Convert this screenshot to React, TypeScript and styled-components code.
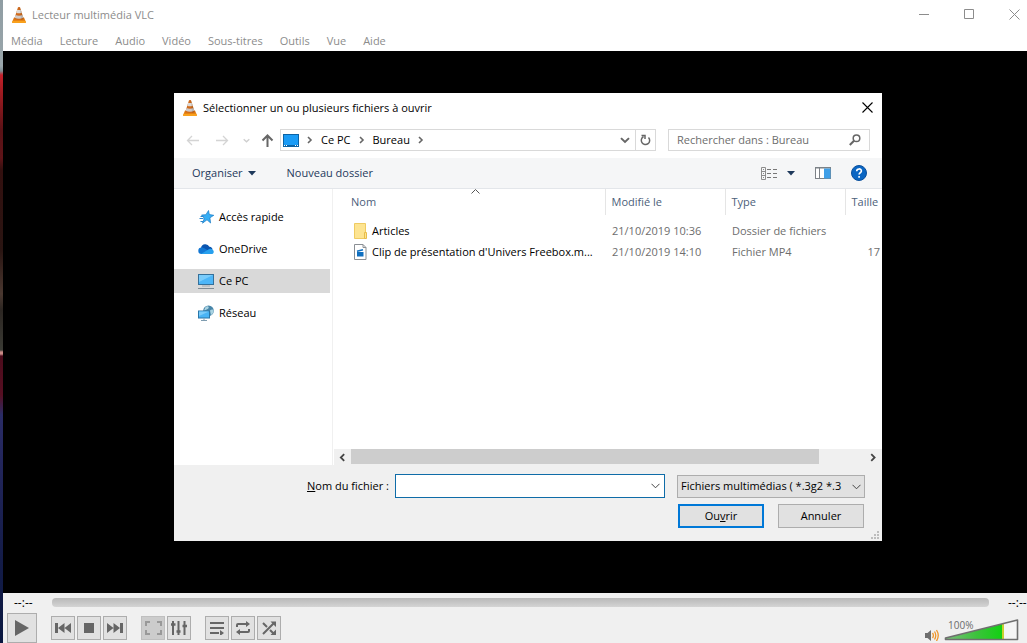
import React from "react";
import styled, { createGlobalStyle, css } from "styled-components";

const GlobalStyle = createGlobalStyle`
  *, *::before, *::after { box-sizing: border-box; }
  body {
    margin: 0;
    overflow: hidden;
    background: #000;
    font-family: "Open Sans", "Noto Sans", sans-serif;
    font-size: 11px;
    line-height: 16px;
    color: #000;
  }
  button, input, select { font: inherit; color: inherit; }
  svg { display: block; flex: none; }
`;

/* ---------- Main window ---------- */

const Desktop = styled.div`
  display: grid;
  grid-template-columns: 3px minmax(0, 1fr);
  min-height: 100vh;
`;

const Wallpaper = styled.div`
  background: linear-gradient(
    #8f9da3 0, #9aa6ab 66px, #7d8b90 71px, #c4202a 75px, #a81c22 88px,
    #5a1216 130px, #5e1418 158px, #33100f 170px, #2a1512 250px, #4a3830 294px,
    #2c2622 310px, #3a3a34 350px, #c98a86 352px, #c98a86 354px, #4c0c1c 356px,
    #560f22 395px, #2a2c66 415px, #23265c 460px, #141c48 560px, #0a1740 100%
  );
`;

const Window = styled.div`
  display: flex;
  flex-direction: column;
  min-width: 0;
  background: #fff;
`;

const TitleBar = styled.header`
  display: flex;
  align-items: center;
  height: 30px;
  padding-left: 8px;
  gap: 5px;
  color: #8c8c8c;
`;

const Title = styled.h1<{ $dark?: boolean }>`
  flex: 1;
  margin: 0;
  font-size: 11px;
  font-weight: 400;
  color: ${(p) => (p.$dark ? "#000" : "inherit")};
`;

const PlainButton = styled.button`
  display: flex;
  align-items: center;
  justify-content: center;
  padding: 0;
  border: 0;
  background: none;
`;

const CaptionButtons = styled.div`
  display: flex;
  align-self: flex-start;
  overflow: hidden;
  width: 125px;
`;

const CaptionButton = styled(PlainButton)`
  flex: none;
  width: 45px;
  height: 28px;
`;

const MenuBar = styled.nav`
  display: flex;
  gap: 17px;
  height: 21px;
  padding: 3px 8px 0;
  color: #8c8c8c;
`;

const MenuLink = styled.a`
  color: inherit;
  text-decoration: none;
`;

const Stage = styled.main`
  position: relative;
  flex: 1;
  min-height: 540px;
  background: #000;
`;

/* ---------- Player controls ---------- */

const Controls = styled.footer`
  height: 50px;
  background: #f0f0f0;
  overflow: hidden;
`;

const SeekRow = styled.div`
  display: flex;
  align-items: center;
  height: 19px;
  padding-left: 11px;
  gap: 19px;
`;

const Time = styled.span`
  flex: none;
  width: 19px;
  font-size: 12px;
  white-space: nowrap;
`;

const Seek = styled.input`
  appearance: none;
  flex: 1;
  min-width: 0;
  height: 9px;
  margin: 0;
  border-radius: 4px;
  background: linear-gradient(#b9b9b9, #c6c6c6 50%, #d4d4d4);
  &::-webkit-slider-thumb { appearance: none; width: 0; height: 0; }
`;

const ButtonRow = styled.div`
  display: flex;
  align-items: flex-start;
  padding: 1px 8px 0 4px;
`;

const ButtonGroup = styled.div<{ $wideGap?: boolean }>`
  display: flex;
  gap: 2px;
  padding-top: 3px;
  margin-left: 14px;
`;

const ControlButton = styled(PlainButton)<{ $large?: boolean; $off?: boolean }>`
  width: ${(p) => (p.$large ? "30px" : "24px")};
  height: ${(p) => (p.$large ? "30px" : "24px")};
  border: 1px solid ${(p) => (p.$off ? "#bfbfbf" : "#adadad")};
  background: ${(p) => (p.$off ? "#cccccc" : "#e1e1e1")};
`;

const Volume = styled.div`
  display: flex;
  align-items: flex-end;
  gap: 5px;
  margin-left: auto;
`;

const VolumeLevel = styled.div`
  position: relative;
  padding-top: 6px;
`;

const VolumeText = styled.span`
  position: absolute;
  left: 4px;
  top: 6px;
  font-size: 10px;
  line-height: 12px;
  color: #6b6b6b;
`;

/* ---------- File dialog ---------- */

const Dialog = styled.section`
  position: absolute;
  left: 171px;
  top: 42px;
  display: flex;
  flex-direction: column;
  width: 708px;
  height: 448px;
  background: #fff;
`;

const DialogTitle = styled.header`
  display: flex;
  align-items: center;
  gap: 5px;
  height: 29px;
  padding: 0 8px;
`;

const CloseButton = styled(PlainButton)`
  width: 14px;
  height: 14px;
`;

const NavRow = styled.div`
  display: flex;
  align-items: center;
  height: 36px;
  padding: 0 12px;
`;

const NavButtons = styled.div`
  display: grid;
  grid-template-columns: 30px 27px 18px 19px;
  align-items: center;
  justify-items: start;
`;

const AddressBar = styled.div`
  display: flex;
  flex: 1;
  height: 22px;
  border: 1px solid #d9d9d9;
`;

const Crumbs = styled.div`
  display: flex;
  flex: 1;
  align-items: center;
  gap: 7px;
  padding-left: 2px;
`;

const Crumb = styled.a`
  color: #000;
  text-decoration: none;
`;

const AddressButton = styled(PlainButton)<{ $ruled?: boolean }>`
  width: 20px;
  ${(p) =>
    p.$ruled &&
    css`
      border-left: 1px solid #d9d9d9;
    `}
`;

const SearchBox = styled.label`
  display: flex;
  align-items: center;
  width: 202px;
  height: 22px;
  margin-left: 12px;
  padding: 0 8px;
  border: 1px solid #d9d9d9;
`;

const SearchInput = styled.input`
  flex: 1;
  min-width: 0;
  padding: 0;
  border: 0;
  outline: 0;
  background: none;
  &::placeholder { color: #6d6d6d; opacity: 1; }
`;

const Toolbar = styled.div`
  display: flex;
  align-items: center;
  height: 31px;
  padding: 0 15px 0 18px;
  border-bottom: 1px solid #e3e6ea;
  background: #f5f6f7;
  color: #1e395b;
`;

const ToolButton = styled(PlainButton)<{ $wide?: boolean }>`
  gap: ${(p) => (p.$wide ? "9px" : "5px")};
`;

const ToolGroup = styled.div<{ $end?: boolean }>`
  display: flex;
  align-items: center;
  gap: ${(p) => (p.$end ? "20px" : "31px")};
  margin-left: ${(p) => (p.$end ? "auto" : "0")};
`;

const Browser = styled.div`
  display: grid;
  grid-template-columns: 159px minmax(0, 1fr);
  flex: 1;
`;

const Places = styled.nav`
  display: flex;
  flex-direction: column;
  gap: 8px;
  padding: 16px 2px 0 0;
  border-right: 1px solid #f0f0f0;
`;

const Place = styled.a<{ $current?: boolean }>`
  display: flex;
  align-items: center;
  gap: 5px;
  height: 24px;
  padding-left: 24px;
  color: #000;
  text-decoration: none;
  background: ${(p) => (p.$current ? "#d9d9d9" : "transparent")};
`;

const Listing = styled.div`
  display: flex;
  flex-direction: column;
  justify-content: space-between;
`;

const FileTable = styled.table`
  width: 100%;
  table-layout: fixed;
  border-collapse: collapse;
`;

const HeadCell = styled.th<{ $width?: number; $first?: boolean }>`
  position: relative;
  width: ${(p) => (p.$width ? `${p.$width}px` : "auto")};
  height: 26px;
  padding: 0 0 0 ${(p) => (p.$first ? "18px" : "6px")};
  border-left: ${(p) => (p.$first ? "0" : "1px solid #e5e5e5")};
  font-weight: 400;
  text-align: left;
  color: #4c607a;
  white-space: nowrap;
`;

const SortMark = styled.svg`
  position: absolute;
  top: 0;
  left: 51%;
`;

const FileBody = styled.tbody`
  &::before {
    content: "";
    display: block;
    height: 5px;
  }
`;

const Cell = styled.td<{ $end?: boolean }>`
  height: 21px;
  padding: 0 2px 0 7px;
  color: #6d6d6d;
  white-space: nowrap;
  text-align: ${(p) => (p.$end ? "right" : "left")};
`;

const NameCell = styled(Cell)`
  padding: 0 6px 0 21px;
  color: #000;
`;

const FileName = styled.span`
  display: flex;
  align-items: center;
  gap: 5px;
`;

const ScrollBar = styled.div`
  display: grid;
  grid-template-columns: 17px minmax(0, 1fr) 17px;
  height: 16px;
  margin: 0 0 0 1px;
  background: #f0f0f0;
`;

const Thumb = styled.div`
  width: 91%;
  height: 15px;
  background: #cdcdcd;
`;

const DialogFooter = styled.footer`
  display: flex;
  flex-direction: column;
  align-items: flex-end;
  gap: 6px;
  position: relative;
  height: 76px;
  padding: 9px 17px 0 0;
  background: #f0f0f0;
`;

const FieldRow = styled.div`
  display: flex;
  align-items: center;
`;

const FieldLabel = styled.label`
  margin-right: 6px;
`;

const Combo = styled.div`
  display: flex;
  width: 270px;
  height: 24px;
  margin-right: 12px;
  border: 1px solid #0f6ca8;
  background: #fff;
`;

const ComboInput = styled.input`
  flex: 1;
  min-width: 0;
  padding: 0 4px;
  border: 0;
  outline: 0;
`;

const ComboButton = styled(PlainButton)`
  width: 17px;
`;

const TypePicker = styled.div`
  position: relative;
  width: 188px;
  height: 23px;
`;

const TypeSelect = styled.select`
  appearance: none;
  width: 100%;
  height: 100%;
  padding: 0 20px 0 3px;
  border: 1px solid #adadad;
  border-radius: 0;
  background: #e1e1e1;
`;

const TypeChevron = styled.svg`
  position: absolute;
  right: 4px;
  top: 9px;
  pointer-events: none;
`;

const Actions = styled.div`
  display: flex;
  gap: 14px;
  padding-right: 1px;
`;

const ActionButton = styled.button<{ $primary?: boolean }>`
  width: 86px;
  height: 24px;
  padding: 0;
  border: ${(p) => (p.$primary ? "2px solid #0078d7" : "1px solid #adadad")};
  background: #e1e1e1;
`;

const Grip = styled.svg`
  position: absolute;
  right: 3px;
  bottom: 2px;
`;

/* ---------- Drawings ---------- */

const Cone = () => (
  <svg width="16" height="16" viewBox="0 0 16 16">
    <path d="M3 10.500h10l1.800 4.500a.8.8 0 0 1-.8 1H2a.8.8 0 0 1-.8-1z" fill="#e07a10" />
    <path d="M1.500 13.800h13l.4 1.400a.8.8 0 0 1-.8.8H1.900a.8.8 0 0 1-.8-.8z" fill="#f9a11c" />
    <path d="M7 .300Q8-.200 9 .300L12.700 12Q8 14.200 3.300 12z" fill="#cf6a1c" />
    <path d="M6.100 3h3.800l.9 2.700Q8 6.900 5.200 5.700z" fill="#dedad6" />
    <path d="M4.500 8Q8 9.500 11.500 8l.9 2.800Q8 12.800 3.600 10.800z" fill="#cfcac8" />
    <path d="M9 .300L12.700 12q-1.200.8-2.500 1L8.300.100z" fill="#000" opacity=".1" />
  </svg>
);

const Chevron = ({ dir, color = "#555", size = 8 }: { dir: "left" | "right" | "down"; color?: string; size?: number }) => (
  <svg width={size} height={size} viewBox="0 0 8 8" fill="none" stroke={color} strokeWidth="1.6">
    <path d={dir === "right" ? "M2 1 5 4 2 7" : dir === "left" ? "M5.500 1 2.500 4l3 3" : "M.8 2.500 4 5.500 7.200 2.500"} />
  </svg>
);

const ThinChevron = () => (
  <svg width="9" height="6" viewBox="0 0 9 6" fill="none" stroke="#444">
    <path d="M.5.8l4 4 4-4" />
  </svg>
);

const Arrow = ({ dir, color }: { dir: "left" | "right" | "up"; color: string }) => (
  <svg width="13" height="13" viewBox="0 0 13 13" fill="none" stroke={color} strokeWidth={dir === "up" ? 2 : 1.3}>
    <path
      d={
        dir === "left"
          ? "M13 6.500H1.500M6 2 1.500 6.500 6 11"
          : dir === "right"
          ? "M0 6.500h11.500M7 2l4.500 4.500L7 11"
          : "M6.500 13V1.500M1.500 6.500l5-5 5 5"
      }
    />
  </svg>
);

const Caret = () => (
  <svg width="8" height="5" viewBox="0 0 8 5">
    <path d="M0 0h8L4 4.500z" fill="#1e395b" />
  </svg>
);

const DesktopIcon = () => (
  <svg width="16" height="13" viewBox="0 0 16 13">
    <rect x=".5" y=".5" width="15" height="12" fill="#1a9bf5" stroke="#0b63a5" />
    <path d="M2 11.500h12" stroke="#0b63a5" />
    <path d="M1 11.500h1M3 11.500h1M12 11.500h1M14 11.500h1" stroke="#fff" />
  </svg>
);

const StarIcon = () => (
  <svg width="16" height="16" viewBox="0 0 16 16">
    <path d="M10.500 1.500l.8 4 4.500.8-3.900 2.500.7 5.200-3.600-3.200-4.500 3.400 1.800-4.900L3.500 6l4.400-.3z" fill="#35aef5" stroke="#1579c4" strokeWidth=".7" />
    <path d="M2.500 7.500h3M1.500 9.500h4M2.500 12.500H5" stroke="#2b86cc" />
  </svg>
);

const CloudIcon = () => (
  <svg width="16" height="16" viewBox="0 0 16 16">
    <path d="M3 6.500a4.500 4.500 0 0 1 8.400-.8c2.200.2 3 1.300 3.100 2.800L8 11.500z" fill="#0a55b0" />
    <path d="M3.500 13A3.200 3.200 0 0 1 3.600 6.500c1.500 0 2.500.6 3.600 1.300l6 3.700-1.700 1.500z" fill="#1277d4" />
    <path d="M3 13 10 8.800c1-.9 2.300-1.300 3.500-.9 3.200 1 2.900 5.100-.3 5.100z" fill="#27a0ee" />
  </svg>
);

const ComputerIcon = () => (
  <svg width="16" height="16" viewBox="0 0 16 16">
    <rect x=".5" y="1.500" width="15" height="10" fill="#4db6f8" stroke="#35709a" />
    <path d="M1 2h14L1 9z" fill="#7accfb" />
    <path d="M4 13h8" stroke="#9fa9b0" />
    <path d="M0 15.500h16" stroke="#7f8b94" />
  </svg>
);

const NetworkIcon = () => (
  <svg width="16" height="16" viewBox="0 0 16 16">
    <circle cx="10.500" cy="5.800" r="5.300" fill="#4785a8" />
    <path d="M7.500 2c1.600-1.300 3.600-.8 3.200.8S8.500 4.600 6 5.500zM12 5.500c1.500-1.500 3-1.300 3.500-.2.200 2.200-1 4-2.500 5z" fill="#a9d3e2" />
    <rect x=".5" y="6" width="11" height="7" fill="#49b4f5" stroke="#2a76a8" />
    <path d="M1 6.500h10L1 11z" fill="#7accfb" />
    <path d="M3 15.500h6M6 13.500v2" stroke="#7f9db0" />
  </svg>
);

const FolderIcon = () => (
  <svg width="13" height="16" viewBox="0 0 13 16">
    <path d="M.5.500h11v15H.5z" fill="#fde491" stroke="#efcb62" />
    <path d="M10.500 9.500h2v6h-2z" fill="#fde491" stroke="#e8bd4a" />
  </svg>
);

const VideoFileIcon = () => (
  <svg width="13" height="16" viewBox="0 0 13 16">
    <path d="M.5.500h8.500l3 3v12H.5z" fill="#fff" stroke="#8a8f94" />
    <path d="M9 .500v3h3" fill="none" stroke="#8a8f94" />
    <path d="M3 8h6.500v4.500H3z" fill="#0f6fc0" />
    <path d="M3 7.200l6-1.500" stroke="#0f6fc0" strokeWidth="1.400" />
  </svg>
);

const places = [
  { label: "Accès rapide", icon: <StarIcon /> },
  { label: "OneDrive", icon: <CloudIcon /> },
  { label: "Ce PC", icon: <ComputerIcon />, current: true },
  { label: "Réseau", icon: <NetworkIcon /> },
];

const files = [
  { name: "Articles", icon: <FolderIcon />, date: "21/10/2019 10:36", type: "Dossier de fichiers", size: "" },
  { name: "Clip de présentation d'Univers Freebox.m...", icon: <VideoFileIcon />, date: "21/10/2019 14:10", type: "Fichier MP4", size: "17" },
];

const menus = ["Média", "Lecture", "Audio", "Vidéo", "Sous-titres", "Outils", "Vue", "Aide"];

const FileDialog = () => (
  <Dialog role="dialog" aria-labelledby="dialog-title">
    <DialogTitle>
      <Cone />
      <Title as="h2" id="dialog-title" $dark>
        Sélectionner un ou plusieurs fichiers à ouvrir
      </Title>
      <CloseButton aria-label="Fermer">
        <svg width="11" height="11" viewBox="0 0 11 11" stroke="#000" strokeWidth="1.100">
          <path d="M.5.500l10 10M10.500.500l-10 10" />
        </svg>
      </CloseButton>
    </DialogTitle>

    <NavRow>
      <NavButtons>
        <PlainButton aria-label="Précédent"><Arrow dir="left" color="#d4d4d4" /></PlainButton>
        <PlainButton aria-label="Suivant"><Arrow dir="right" color="#d4d4d4" /></PlainButton>
        <PlainButton aria-label="Emplacements récents"><Chevron dir="down" color="#cfcfcf" size={7} /></PlainButton>
        <PlainButton aria-label="Dossier parent"><Arrow dir="up" color="#666" /></PlainButton>
      </NavButtons>
      <AddressBar>
        <Crumbs>
          <DesktopIcon />
          <Chevron dir="right" color="#666" />
          <Crumb href="#pc">Ce PC</Crumb>
          <Chevron dir="right" color="#666" />
          <Crumb href="#bureau">Bureau</Crumb>
          <Chevron dir="right" color="#666" />
        </Crumbs>
        <AddressButton aria-label="Historique"><Chevron dir="down" color="#666" size={10} /></AddressButton>
        <AddressButton aria-label="Actualiser" $ruled>
          <svg width="11" height="12" viewBox="0 0 11 12" fill="none" stroke="#666" strokeWidth="1.500">
            <path d="M3.500 2.700A4.200 4.200 0 1 0 8.500 3.500M1.500 1.500h3.500v3.500" />
          </svg>
        </AddressButton>
      </AddressBar>
      <SearchBox>
        <SearchInput type="search" aria-label="Rechercher" placeholder="Rechercher dans : Bureau" />
        <svg width="12" height="12" viewBox="0 0 12 12" fill="none" stroke="#666" strokeWidth="1.500">
          <circle cx="7.500" cy="4.300" r="3.300" />
          <path d="M5 6.800.8 11" strokeWidth="2" />
        </svg>
      </SearchBox>
    </NavRow>

    <Toolbar>
      <ToolGroup>
        <ToolButton>Organiser <Caret /></ToolButton>
        <ToolButton>Nouveau dossier</ToolButton>
      </ToolGroup>
      <ToolGroup $end>
        <ToolButton $wide aria-label="Affichage">
          <svg width="17" height="13" viewBox="0 0 17 13" fill="none" stroke="#8c8c8c">
            <path d="M.5.500h4v12h-4zM2 2.500h1M2 6.500h1M2 10.500h1M.5 4.500h4M.5 8.500h4" />
            <path d="M6 2.500h4M12 2.500h4M6 6.500h4M12 6.500h4M6 10.500h4M12 10.500h4" stroke="#777" />
          </svg>
          <Caret />
        </ToolButton>
        <ToolButton aria-label="Volet de visualisation">
          <svg width="16" height="12" viewBox="0 0 16 12">
            <rect x=".5" y=".5" width="15" height="11" fill="#fff" stroke="#7d8287" />
            <path d="M0 1h16M4.500 1v11" stroke="#7d8287" />
            <rect x="9" y="1.500" width="6.500" height="10" fill="#3f9fe8" />
          </svg>
        </ToolButton>
        <ToolButton aria-label="Aide">
          <svg width="16" height="16" viewBox="0 0 16 16">
            <circle cx="8" cy="8" r="7.500" fill="#0b66c3" stroke="#0a4f9c" />
            <path d="M5.700 6.200c0-3 4.700-3 4.700-.2 0 1.800-2.300 1.700-2.300 3.500M8.100 11v1.700" fill="none" stroke="#fff" strokeWidth="1.600" />
          </svg>
        </ToolButton>
      </ToolGroup>
    </Toolbar>

    <Browser>
      <Places>
        {places.map((p) => (
          <Place key={p.label} href="#" $current={p.current}>
            {p.icon}
            {p.label}
          </Place>
        ))}
      </Places>
      <Listing>
        <FileTable>
          <thead>
            <tr>
              <HeadCell $width={272} $first>
                Nom
                <SortMark width="9" height="5" viewBox="0 0 9 5" fill="none" stroke="#555">
                  <path d="M.5 4.500l4-4 4 4" />
                </SortMark>
              </HeadCell>
              <HeadCell $width={120}>Modifié le</HeadCell>
              <HeadCell $width={120}>Type</HeadCell>
              <HeadCell>Taille</HeadCell>
            </tr>
          </thead>
          <FileBody>
            {files.map((f) => (
              <tr key={f.name}>
                <NameCell>
                  <FileName>{f.icon}{f.name}</FileName>
                </NameCell>
                <Cell>{f.date}</Cell>
                <Cell>{f.type}</Cell>
                <Cell $end>{f.size}</Cell>
              </tr>
            ))}
          </FileBody>
        </FileTable>
        <ScrollBar>
          <PlainButton aria-label="Défiler à gauche"><Chevron dir="left" color="#444" size={9} /></PlainButton>
          <Thumb />
          <PlainButton aria-label="Défiler à droite"><Chevron dir="right" color="#444" size={9} /></PlainButton>
        </ScrollBar>
      </Listing>
    </Browser>

    <DialogFooter>
      <FieldRow>
        <FieldLabel htmlFor="filename"><u>N</u>om du fichier :</FieldLabel>
        <Combo>
          <ComboInput id="filename" type="text" />
          <ComboButton aria-label="Fichiers récents"><ThinChevron /></ComboButton>
        </Combo>
        <TypePicker>
          <TypeSelect aria-label="Type de fichier">
            <option>Fichiers multimédias ( *.3g2 *.3</option>
          </TypeSelect>
          <TypeChevron width="9" height="6" viewBox="0 0 9 6" fill="none" stroke="#444">
            <path d="M.5.800l4 4 4-4" />
          </TypeChevron>
        </TypePicker>
      </FieldRow>
      <Actions>
        <ActionButton $primary>Ou<u>v</u>rir</ActionButton>
        <ActionButton>Annuler</ActionButton>
      </Actions>
      <Grip width="8" height="8" viewBox="0 0 8 8" fill="#bdbdbd">
        <path d="M6 0h2v2H6zM3 3h2v2H3zM6 3h2v2H6zM0 6h2v2H0zM3 6h2v2H3zM6 6h2v2H6z" />
      </Grip>
    </DialogFooter>
  </Dialog>
);

const PlayerControls = () => (
  <Controls>
    <SeekRow>
      <Time>--:--</Time>
      <Seek type="range" aria-label="Position" defaultValue={0} />
      <Time>--:--</Time>
    </SeekRow>
    <ButtonRow>
      <ControlButton $large aria-label="Lecture">
        <svg width="14" height="16" viewBox="0 0 14 16" fill="#666"><path d="M0 0l14 8-14 8z" /></svg>
      </ControlButton>
      <ButtonGroup>
        <ControlButton aria-label="Précédent">
          <svg width="16" height="10" viewBox="0 0 16 10" fill="#666"><path d="M0 0h3v10H0zM9.500 0v10L3 5zM16 0v10L9.500 5z" /></svg>
        </ControlButton>
        <ControlButton aria-label="Arrêter">
          <svg width="10" height="10" viewBox="0 0 10 10" fill="#666"><path d="M0 0h10v10H0z" /></svg>
        </ControlButton>
        <ControlButton aria-label="Suivant">
          <svg width="16" height="10" viewBox="0 0 16 10" fill="#666"><path d="M13 0h3v10h-3zM6.500 0v10L13 5zM0 0v10l6.500-5z" /></svg>
        </ControlButton>
      </ButtonGroup>
      <ButtonGroup>
        <ControlButton $off aria-label="Plein écran">
          <svg width="17" height="14" viewBox="0 0 17 14" fill="none" stroke="#999" strokeWidth="2"><path d="M1 5V1h4M12 1h4v4M16 9v4h-4M5 13H1V9" /></svg>
        </ControlButton>
        <ControlButton aria-label="Paramètres étendus">
          <svg width="16" height="14" viewBox="0 0 16 14" stroke="#666"><path d="M2 0v14M7.500 0v14M13.500 0v14" strokeWidth="2" /><path d="M0 3.500h4.500M5.500 10.500h4M11.500 5h4.500" strokeWidth="2.400" /></svg>
        </ControlButton>
      </ButtonGroup>
      <ButtonGroup>
        <ControlButton aria-label="Liste de lecture">
          <svg width="14" height="14" viewBox="0 0 14 14" stroke="#666" strokeWidth="2"><path d="M0 2h14M0 7h14M0 12h9" /><path d="M10 9l4 3-4 3z" fill="#666" stroke="none" /></svg>
        </ControlButton>
        <ControlButton aria-label="Répéter">
          <svg width="14" height="14" viewBox="0 0 14 14" fill="none" stroke="#666" strokeWidth="2"><path d="M1 6V4q0-1 1-1h9M13 8v2q0 1-1 1H3" /><path d="M10 0l4 3-4 3zM4 8l-4 3 4 3z" fill="#666" stroke="none" /></svg>
        </ControlButton>
        <ControlButton aria-label="Aléatoire">
          <svg width="14" height="14" viewBox="0 0 14 14" fill="none" stroke="#666" strokeWidth="2"><path d="M1 13 12 2M1 2l4 4M8 9l4 4" /><path d="M8.500.500H14V6zM14 8.500V14H8.500z" fill="#666" stroke="none" /></svg>
        </ControlButton>
      </ButtonGroup>
      <Volume>
        <PlainButton aria-label="Muet">
          <svg width="14" height="14" viewBox="0 0 14 14" fill="none">
            <path d="M0 6h2.500L6 3v11L2.500 11H0z" fill="#6e6e6e" />
            <path d="M7.500 6q1.800 2.500 0 5M9.500 4.500q2.500 4 0 8M11.500 3q3.500 5.500 0 11" stroke="#f0962a" strokeWidth="1.300" />
          </svg>
        </PlainButton>
        <VolumeLevel>
          <svg width="75" height="22" viewBox="0 0 75 22" role="img" aria-label="Volume">
            <defs>
              <linearGradient id="level" x1="0" x2="1">
                <stop offset="0" stopColor="#7cc07c" />
                <stop offset=".55" stopColor="#3cc23c" />
                <stop offset="1" stopColor="#12d012" />
              </linearGradient>
            </defs>
            <path d="M1.500 20.500V19L73.500 1v19.500z" fill="#f5f5f5" />
            <path d="M1.500 20.500V19L58 4.900v15.600z" fill="url(#level)" />
            <path d="M58 4.900l2-.5v16.100h-2z" fill="#c8d030" />
            <path d="M1.500 20.500V19L73.500 1v19.500z" fill="none" stroke="#6f6f6f" strokeWidth="1.600" strokeLinejoin="round" />
          </svg>
          <VolumeText>100%</VolumeText>
        </VolumeLevel>
      </Volume>
    </ButtonRow>
  </Controls>
);

export default function App() {
  return (
    <>
      <GlobalStyle />
      <Desktop>
        <Wallpaper />
        <Window>
          <TitleBar>
            <Cone />
            <Title>Lecteur multimédia VLC</Title>
            <CaptionButtons>
              <CaptionButton aria-label="Réduire">
                <svg width="11" height="11" viewBox="0 0 11 11" stroke="#8c8c8c"><path d="M0 5.500h10" /></svg>
              </CaptionButton>
              <CaptionButton aria-label="Agrandir">
                <svg width="11" height="11" viewBox="0 0 11 11" fill="none" stroke="#8c8c8c"><path d="M.5.500h9v9h-9z" /></svg>
              </CaptionButton>
              <CaptionButton aria-label="Fermer">
                <svg width="11" height="11" viewBox="0 0 11 11" stroke="#8c8c8c"><path d="M.5.500l10 10M10.500.500l-10 10" /></svg>
              </CaptionButton>
            </CaptionButtons>
          </TitleBar>
          <MenuBar>
            {menus.map((m) => (
              <MenuLink key={m} href="#">{m}</MenuLink>
            ))}
          </MenuBar>
          <Stage>
            <FileDialog />
          </Stage>
          <PlayerControls />
        </Window>
      </Desktop>
    </>
  );
}
